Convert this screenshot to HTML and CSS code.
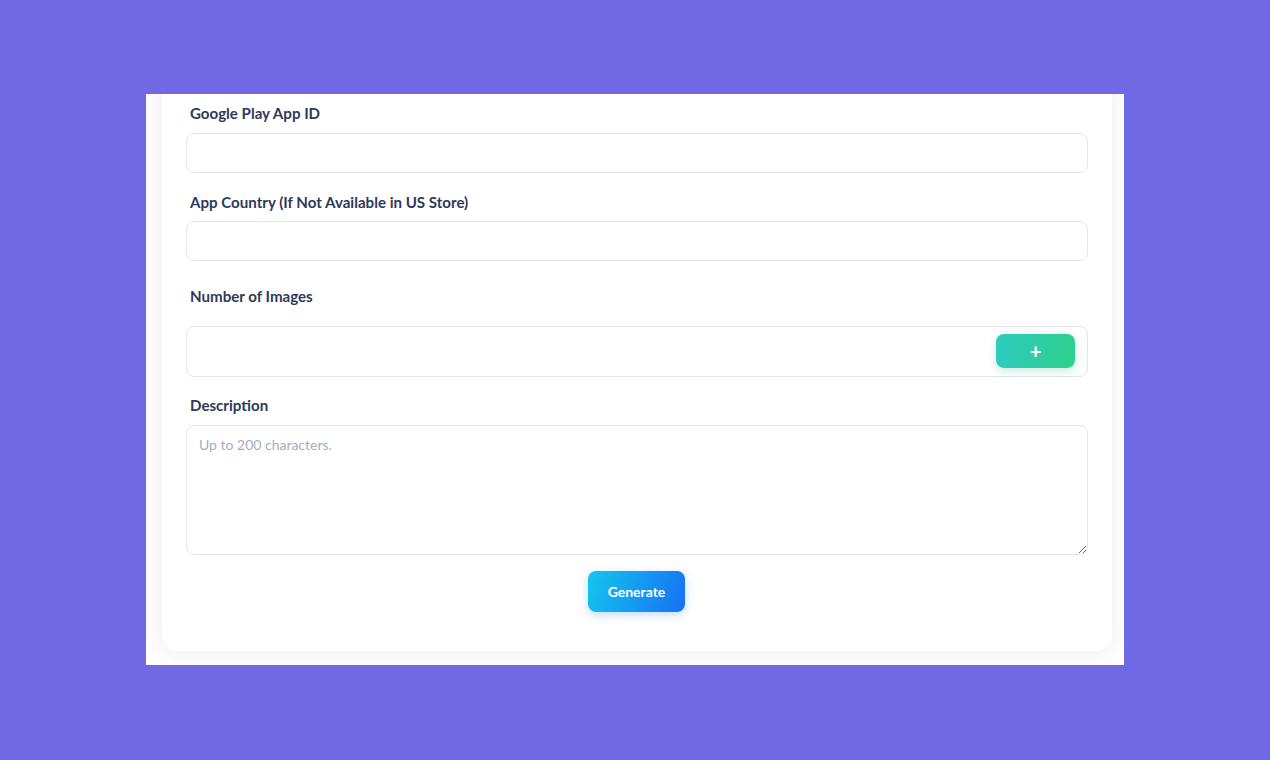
FILE: index.html
```html
<!DOCTYPE html>
<html lang="en">
<head>
<meta charset="utf-8">
<title>Generate</title>
<link rel="stylesheet" href="styles.css">
</head>
<body>
<div class="page">
  <div class="frame">
    <form class="card">
      <label class="label l1" for="appid">Google Play App ID</label>
      <input class="field" id="appid" type="text">
      <label class="label l2" for="country">App Country (If Not Available in US Store)</label>
      <input class="field" id="country" type="text">
      <label class="label l3" for="num">Number of Images</label>
      <div class="numbox">
        <input class="numinput" id="num" type="text">
        <button type="button" class="plus">+</button>
      </div>
      <label class="label l4" for="desc">Description</label>
      <textarea class="area" id="desc" placeholder="Up to 200 characters."></textarea>
      <div class="actions">
        <button type="button" class="gen">Generate</button>
      </div>
    </form>
  </div>
</div>
</body>
</html>
```

FILE: styles.css
```css
html, body {
  margin: 0;
  padding: 0;
}
body {
  background: #7169e3;
  font-family: "Lato", "Noto Sans", sans-serif;
  height: 760px;
  overflow: hidden;
}
.page {
  padding: 94px 0 0 146px;
}
.frame {
  width: 978px;
  height: 571px;
  background: #ffffff;
  overflow: hidden;
  box-sizing: border-box;
  padding: 0 12px 0 16px;
}
.card {
  margin-top: -20px;
  width: 950px;
  box-sizing: border-box;
  background: #ffffff;
  border-radius: 16px;
  box-shadow: 0 0 24px rgba(30, 40, 70, 0.09);
  padding: 30px 24px 39px;
  display: flex;
  flex-direction: column;
}
.label {
  display: block;
  font-size: 15.1px;
  line-height: 18px;
  font-weight: 700;
  color: #2e3a59;
  padding-left: 4px;
}
.l1 { margin-bottom: 11px; }
.l2 { margin-top: 20px; margin-bottom: 10px; }
.l3 { margin-top: 26px; margin-bottom: 21px; }
.l4 { margin-top: 19px; margin-bottom: 11px; }
.field {
  display: block;
  width: 100%;
  height: 40px;
  box-sizing: border-box;
  border: 1px solid #e2e5ea;
  border-radius: 8px;
  background: #fff;
  outline: none;
  font-family: inherit;
  font-size: 14px;
  padding: 0 12px;
}
.numbox {
  height: 51px;
  box-sizing: border-box;
  border: 1px solid #e2e5ea;
  border-radius: 8px;
  display: flex;
  align-items: center;
  padding: 0 12px 0 12px;
}
.numinput {
  flex: 1;
  border: none;
  outline: none;
  height: 100%;
  background: transparent;
  font-family: inherit;
  font-size: 14px;
  padding: 0;
}
.plus {
  width: 79px;
  height: 34px;
  border: none;
  border-radius: 8px;
  background: linear-gradient(100deg, #2fcbc0, #2dd08a);
  color: #fff;
  font-family: inherit;
  font-size: 20px;
  font-weight: 700;
  line-height: 34px;
  padding: 0;
  box-shadow: 0 3px 8px rgba(40, 180, 150, 0.25);
  margin-top: -1px;
}
.area {
  display: block;
  width: 100%;
  height: 130px;
  box-sizing: border-box;
  border: 1px solid #e2e5ea;
  border-radius: 8px;
  padding: 10px 12px;
  font-family: inherit;
  font-size: 14px;
  line-height: 18px;
  outline: none;
  resize: vertical;
  color: #333;
}
.area::placeholder {
  color: #a6adba;
}
.actions {
  display: flex;
  justify-content: center;
  margin-top: 16px;
}
.gen {
  width: 97px;
  height: 41px;
  border: none;
  border-radius: 8px;
  background: linear-gradient(110deg, #14c6ee, #1770f5);
  color: #fff;
  font-family: inherit;
  font-size: 14px;
  font-weight: 700;
  padding: 0;
  margin-right: 1px;
  box-shadow: 0 3px 10px rgba(20, 110, 230, 0.25);
}
```
